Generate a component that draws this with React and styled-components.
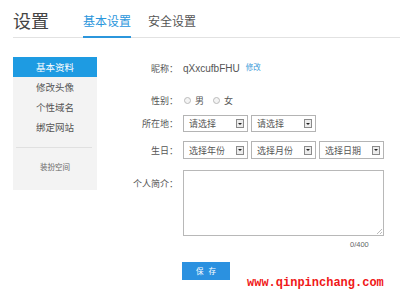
import styled, { createGlobalStyle } from 'styled-components';

const Global = createGlobalStyle`
  body {
    margin: 0;
    background: #fff;
    font-family: "Noto Sans CJK SC", "Liberation Sans", sans-serif;
    color: #555;
  }
`;

const Page = styled.div`
  width: 400px;
  height: 306px;
  overflow: hidden;
`;

const Header = styled.div`
  display: flex;
  align-items: flex-end;
  margin-left: 13px;
  height: 38px;
  border-bottom: 1px solid #e2e2e2;
  box-sizing: border-box;
`;

const Title = styled.div`
  font-size: 18px;
  line-height: 18px;
  color: #444;
  padding-bottom: 8px;
  width: 70px;
`;

const Tab = styled.div`
  font-size: 12px;
  line-height: 12px;
  padding-bottom: 9px;
  margin-right: 17px;
  margin-bottom: -1px;
  color: ${(p) => (p.$active ? '#2b96dc' : '#555')};
  border-bottom: 2px solid ${(p) => (p.$active ? '#2b96dc' : 'transparent')};
`;

const Main = styled.div`
  display: flex;
  margin-top: 19px;
  margin-left: 13px;
`;

const Side = styled.div`
  width: 84px;
  height: 133px;
  background: #f3f3f3;
  display: flex;
  flex-direction: column;
`;

const SideItem = styled.div`
  height: 20px;
  line-height: 20px;
  text-align: center;
  font-size: 9.5px;
  color: ${(p) => (p.$active ? '#fff' : '#555')};
  background: ${(p) => (p.$active ? '#1e9be2' : 'transparent')};
`;

const Divider = styled.div`
  height: 1px;
  background: #e0e0e0;
  margin: 10px 5px 0 3px;
`;

const SideSmall = styled.div`
  text-align: center;
  font-size: 7.5px;
  margin-top: 13px;
  color: #666;
`;

const Form = styled.div`
  display: flex;
  flex-direction: column;
`;

const Row = styled.div`
  display: flex;
  align-items: ${(p) => (p.$top ? 'flex-start' : 'center')};
  margin-top: ${(p) => p.$mt}px;
  height: ${(p) => p.$h}px;
`;

const Label = styled.div`
  width: 81px;
  text-align: right;
  font-size: 9px;
  color: #555;
  margin-right: 5px;
  padding-top: ${(p) => (p.$top ? 7 : 0)}px;
`;

const Nick = styled.span`
  font-family: "Liberation Sans", Arial, sans-serif;
  font-size: 10px;
  color: #555;
`;

const Link = styled.span`
  font-size: 7.5px;
  color: #3b9ad8;
  margin-left: 6px;
  position: relative;
  top: -2px;
`;

const Radio = styled.span`
  display: inline-block;
  width: 5px;
  height: 5px;
  border-radius: 50%;
  border: 1px solid #bbb;
  background: #f4f4f4;
  margin-left: ${(p) => p.$ml}px;
  margin-right: 4px;
`;

const RadioText = styled.span`
  font-size: 9px;
  color: #555;
`;

const Select = styled.div`
  width: 65px;
  height: ${(p) => p.$h}px;
  box-sizing: border-box;
  border: 1px solid #b4b4b4;
  background: #fff;
  display: flex;
  align-items: center;
  justify-content: space-between;
  padding: 0 3px 0 5px;
  margin-right: 3px;
  font-size: 9px;
  color: #555;
`;

const Arrow = styled.span`
  width: 8px;
  height: 9px;
  box-sizing: border-box;
  border: 1px solid #8a8a8a;
  background: #ececec;
  display: flex;
  align-items: center;
  justify-content: center;
  &::after {
    content: '';
    border-left: 2px solid transparent;
    border-right: 2px solid transparent;
    border-top: 2px solid #222;
  }
`;

const Textarea = styled.div`
  width: 201px;
  height: 66px;
  box-sizing: border-box;
  border: 1px solid #b8b8b8;
  position: relative;
`;

const Grip = styled.svg`
  position: absolute;
  right: 0;
  bottom: 0;
`;

const Count = styled.div`
  font-family: "Liberation Sans", Arial, sans-serif;
  font-size: 7.5px;
  color: #666;
  margin-top: 4px;
  margin-left: 253px;
`;

const Bottom = styled.div`
  display: flex;
  align-items: flex-end;
  margin-top: 13px;
`;

const SaveButton = styled.div`
  margin-left: 85px;
  width: 48px;
  height: 18px;
  line-height: 18px;
  background: #2b91e0;
  color: #fff;
  font-size: 7.5px;
  text-align: center;
  letter-spacing: 5px;
  text-indent: 5px;
`;

const Watermark = styled.div`
  font-family: "Liberation Mono", monospace;
  font-size: 12px;
  font-weight: bold;
  color: #f01818;
  margin-left: 17px;
  margin-bottom: -10px;
`;

const selectBox = (text, h) => (
  <Select $h={h}>
    <span>{text}</span>
    <Arrow />
  </Select>
);

export default function App() {
  return (
    <Page>
      <Global />
      <Header>
        <Title>设置</Title>
        <Tab $active>基本设置</Tab>
        <Tab>安全设置</Tab>
      </Header>
      <Main>
        <Side>
          <SideItem $active>基本资料</SideItem>
          <SideItem>修改头像</SideItem>
          <SideItem>个性域名</SideItem>
          <SideItem>绑定网站</SideItem>
          <Divider />
          <SideSmall>装扮空间</SideSmall>
        </Side>
        <Form>
          <Row $mt={1} $h={20}>
            <Label>昵称：</Label>
            <Nick>qXxcufbFHU</Nick>
            <Link>修改</Link>
          </Row>
          <Row $mt={12} $h={20}>
            <Label>性别：</Label>
            <Radio $ml={1} />
            <RadioText>男</RadioText>
            <Radio $ml={9} />
            <RadioText>女</RadioText>
          </Row>
          <Row $mt={5} $h={17}>
            <Label>所在地：</Label>
            {selectBox('请选择', 17)}
            {selectBox('请选择', 17)}
          </Row>
          <Row $mt={9} $h={18}>
            <Label>生日：</Label>
            {selectBox('选择年份', 18)}
            {selectBox('选择月份', 18)}
            {selectBox('选择日期', 18)}
          </Row>
          <Row $mt={11} $h={66} $top>
            <Label $top>个人简介：</Label>
            <Textarea>
              <Grip width="7" height="7" viewBox="0 0 7 7">
                <path d="M6 1 L1 6 M6 4 L4 6" stroke="#aaa" strokeWidth="0.8" />
              </Grip>
            </Textarea>
          </Row>
          <Count>0/400</Count>
          <Bottom>
            <SaveButton>保存</SaveButton>
            <Watermark>www.qinpinchang.com</Watermark>
          </Bottom>
        </Form>
      </Main>
    </Page>
  );
}
